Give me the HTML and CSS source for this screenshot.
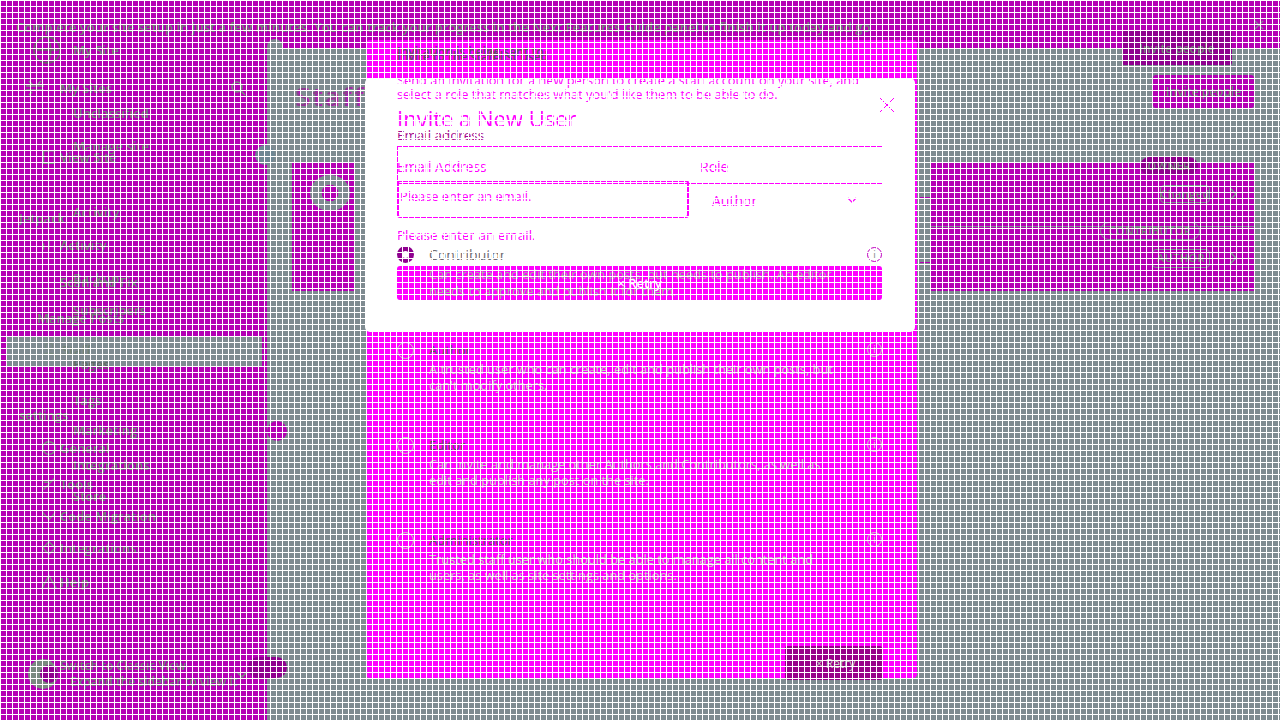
FILE: index.html
```html
<!DOCTYPE html>
<html lang="en">
<head>
<meta charset="utf-8">
<title>Invite a New User</title>
<link rel="stylesheet" href="styles.css">
</head>
<body>
<header class="topbar">
  <p class="notice">Complete your site setup in just a few minutes. You can track your progress in the Next Features Guide panel to finish it up today and go</p>
  <svg class="notice-close" viewBox="0 0 12 12"><path d="M1 1l10 10M11 1L1 11"/></svg>
</header>
<div class="shell">
  <nav class="sidebar">
    <div class="row site"><svg class="ic ic-site" viewBox="0 0 30 30"><circle cx="15" cy="15" r="13"/><path d="M4 15h22M15 2c5 6 5 20 0 26"/></svg><span class="tx">My Site</span></div>
    <div class="row t-88 outer"><svg class="ic" viewBox="0 0 20 20"><path d="M1 8h18M1 12h18M4 3l3 3M16 3l-3 3M4 17l3-3"/></svg><span class="tx">My Sites</span><svg class="search" viewBox="0 0 16 16"><circle cx="7" cy="7" r="5"/><path d="M11 11l4 4"/></svg></div>
    <div class="row t-113 inner"><span class="tx">Unclassified</span></div>
    <div class="row t-146 inner"><span class="tx">Manage site</span></div>
    <div class="row t-157 outer"><svg class="ic" viewBox="0 0 20 20"><path d="M4 3h12v14H4z"/></svg><span class="tx">View Site</span></div>
    <div class="row t-212 inner"><span class="tx">Activity</span></div>
    <div class="row t-218 section"><span class="tx">Jetpack</span></div>
    <div class="row t-245 outer"><svg class="ic" viewBox="0 0 20 20"><path d="M4 15V8M10 15V4M16 15v-5"/></svg><span class="tx">Activity</span></div>
    <div class="row t-278 inner"><span class="tx">Backup</span></div>
    <div class="row t-282 outer"><span class="tx">Scan and Fix</span></div>
    <div class="row t-310 inner"><span class="tx">Subscribers</span></div>
    <div class="row t-318 section-b"><span class="tx">Manage Posts</span></div>
    <div class="row t-350 staff"><svg class="ic" viewBox="0 0 20 20"><circle cx="10" cy="6" r="4"/><path d="M3 18c0-6 14-6 14 0"/></svg><span class="tx">Staff</span></div>
    <div class="row t-364 inner"><span class="tx">Pages</span></div>
    <div class="row t-400 inner"><span class="tx">Tags</span></div>
    <div class="row t-415 section"><span class="tx">settings</span></div>
    <div class="row t-430 inner"><span class="tx">Marketing</span></div>
    <div class="row t-448 outer"><svg class="ic" viewBox="0 0 20 20"><circle cx="10" cy="10" r="7"/></svg><span class="tx">General</span></div>
    <div class="row t-465 inner"><span class="tx">Integrations</span></div>
    <div class="row t-484 outer"><svg class="ic" viewBox="0 0 20 20"><path d="M4 16L16 4M4 8h6"/></svg><span class="tx">Tools</span></div>
    <div class="row t-496 inner"><span class="tx">Store</span></div>
    <div class="row t-516 outer"><svg class="ic" viewBox="0 0 20 20"><path d="M3 6l7 8 7-8"/></svg><span class="tx">Code Migration</span></div>
    <div class="row t-548 outer"><svg class="ic" viewBox="0 0 20 20"><path d="M10 3l7 7-7 7-7-7z"/></svg><span class="tx">Integrations</span></div>
    <div class="row t-582 outer"><svg class="ic" viewBox="0 0 20 20"><path d="M10 3l8 14H2z"/></svg><span class="tx">Help</span></div>
    <div class="foot">
      <svg class="foot-ic" viewBox="0 0 46 34"><circle class="foot-ring" cx="23" cy="17" r="15"/><circle class="foot-core" cx="29" cy="17" r="9"/></svg>
      <div class="foot-tx"><span class="tx">Switch to Classic View</span><span class="tx tx-low">Expand the sidebar to view it</span></div>
      <svg class="foot-chev" viewBox="0 0 12 8"><path d="M1 1l5 5 5-5"/></svg>
    </div>
  </nav>
  <main class="main">
    <h1 class="title">Staff</h1>
    <div class="cards">
      <section class="card card-left"><span class="avatar"></span></section>
      <section class="card card-right">
        <span class="tick tick-a"></span>
        <span class="tick tick-b"></span>
        <span class="pill owner">OWNER</span>
        <div class="line-row"><span class="pill soft change">Changed</span><svg class="chev" viewBox="0 0 8 14"><path d="M1 1l6 6-6 6"/></svg></div>
        <div class="line-row contrib-row"><span class="pill soft contrib">CONTRIBUTOR</span></div>
        <div class="line-row"><span class="pill soft authorp">AUTHOR</span><svg class="chev" viewBox="0 0 8 14"><path d="M1 1l6 6-6 6"/></svg></div>
      </section>
    </div>
  </main>
</div>

<button class="invite-top">Invite people</button>
<button class="invite-second">Invite people</button>
<span class="edge-dot edge-top"></span>
<span class="edge-dot edge-mid"></span>
<span class="edge-dot edge-blue"></span>
<span class="edge-pill"></span>

<div class="panel">
  <p class="panel-head">Invitation is being sent to<br>Invite to the staff list used</p>
  <div class="role role-author"><span class="radio"></span><div><b>Author</b><p>A trusted user who can create, edit and publish their own posts, but<br>can't modify others.</p></div><span class="info">i</span></div>
  <div class="role role-editor"><span class="radio"></span><div><b>Editor</b><p>Can invite and manage other Authors and Contributors, as well as<br>edit and publish any post on the site.</p></div><span class="info">i</span></div>
  <div class="role role-admin"><span class="radio"></span><div><b>Administrator</b><p>Trusted staff user who should be able to manage all content and<br>users, as well as site settings and options.</p></div><span class="info">i</span></div>
  <button class="cancel"><span class="x">×</span> Retry</button>
</div>

<div class="modal">
  <p class="intro">Send an invitation for a new person to create a staff account on your site, and select a role that matches what you'd like them to be able to do.</p>
  <h2 class="modal-title">Invite a New User</h2>
  <div class="field-label">Email address</div>
  <div class="box">
    <span class="cap">Email Address</span>
    <span class="cap cap-role">Role</span>
  </div>
  <div class="inputs">
    <div class="err-input">Please enter an email.</div>
    <div class="select"><span>Author</span><svg viewBox="0 0 12 8"><path d="M1 1l5 5 5-5"/></svg></div>
  </div>
  <p class="err-msg">Please enter an email.</p>
  <div class="contrib-line"><span class="radio-on"></span><b>Contributor</b><span class="info-on">i</span></div>
  <div class="retry">
    <p class="retry-under">Can create and edit their own posts, but needs to publish. An editor<br>needs to approve and publish it for them.</p>
    <span class="retry-label"><span class="x">×</span> Retry</span>
  </div>
  <svg class="close" viewBox="0 0 16 16"><path d="M1 1l14 14M15 1L1 15"/></svg>
</div>

<div class="mesh"></div>
</body>
</html>
```
FILE: styles.css
```css
* { box-sizing: border-box; }
html, body { margin: 0; height: 100%; }
body { width: 1280px; height: 720px; overflow: hidden; position: relative; background: #7f8b91; font-family: "Open Sans", "Noto Sans", sans-serif; font-size: 12px; color: #6f8176; }
p, h1, h2 { margin: 0; }
svg { fill: none; stroke: currentColor; stroke-width: 1.5; }

.topbar { height: 49px; background: #b400b4; display: flex; align-items: center; padding: 4px 16px 0 16px; position: relative; }
.notice { flex: 1; font-size: 13px; font-weight: 600; line-height: 14px; margin-top: 1px; white-space: nowrap; }
.notice-close { width: 10px; height: 10px; margin: 0 0 4px 0; color: #7f8b91; }

.shell { display: flex; height: 671px; }
.sidebar { width: 267px; background: #b400b4; display: flex; flex-direction: column; position: relative; font-size: 13px; font-weight: 600; }
.row { height: 14px; line-height: 14px; display: flex; align-items: center; white-space: nowrap; position: relative; }
.tx { color: #6f8176; }
.ic { width: 18px; height: 18px; flex: none; color: #7a8a80; position: absolute; left: 40px; top: -2px; }
.outer { padding-left: 60px; }
.inner { padding-left: 73px; }
.section { padding-left: 19px; }
.section-b { padding-left: 37px; }
.site { margin-top: -6px; padding-left: 73px; height: 14px; font-size: 13px; }
.ic-site { width: 30px; height: 30px; left: 32px; top: -8px; color: #666; }
.search { width: 16px; height: 16px; position: absolute; left: 230px; top: -1px; color: #7a8a80; }
.t-88 { margin-top: 24px; }
.t-88 .ic { left: 25px; width: 20px; height: 20px; top: -3px; }
.t-113 { margin-top: 11px; }
.t-146 { margin-top: 19px; }
.t-157 { margin-top: -3px; }
.t-212 { margin-top: 41px; }
.t-218 { margin-top: -8px; }
.t-245 { margin-top: 13px; }
.t-278 { margin-top: 19px; }
.t-282 { margin-top: -10px; }
.t-310 { margin-top: 14px; }
.t-318 { margin-top: -6px; }
.t-350 { margin-top: 18px; padding-left: 62px; }
.t-364 { margin-top: 0; }
.t-400 { margin-top: 22px; }
.t-415 { margin-top: 1px; }
.t-430 { margin-top: 1px; }
.t-448 { margin-top: 4px; }
.t-465 { margin-top: 3px; }
.t-484 { margin-top: 5px; }
.t-496 { margin-top: -2px; }
.t-516 { margin-top: 6px; }
.t-548 { margin-top: 18px; }
.t-582 { margin-top: 20px; }
.staff::before { content: ""; position: absolute; left: 6px; right: 5px; top: -6px; height: 30px; background: #7f8b91; }
.staff .tx, .staff .ic { position: relative; }
.staff .ic { position: absolute; }
.t-364 .tx { color: #5f6a66; }

.foot { margin-top: 68px; display: flex; align-items: center; padding-left: 20px; height: 34px; position: relative; }
.foot-ic { width: 46px; height: 34px; stroke: none; flex: none; }
.foot-ring { fill: #7a8a80; }
.foot-core { fill: #8f008f; }
.foot-tx { display: flex; flex-direction: column; font-size: 12px; line-height: 16px; margin-left: -6px; white-space: nowrap; }
.tx-low { margin-left: 10px; }
.foot-chev { width: 12px; height: 8px; position: absolute; left: 236px; top: 14px; color: #7a8a80; }

.main { flex: 1; padding: 34px 25px 0 28px; position: relative; }
.title { font-weight: 400; font-size: 26px; line-height: 26px; letter-spacing: 3px; color: #8f3f8f; text-shadow: 1px 0 #d000d0; }
.cards { display: flex; justify-content: space-between; margin-top: 54px; height: 128px; margin-left: -3px; }
.card { background: #b400b4; height: 128px; position: relative; }
.card-left { width: 62px; padding: 12px 18px; }
.avatar { display: block; width: 40px; height: 36px; border-radius: 50%; background: radial-gradient(circle, #b400b4 0 30%, #7f8b91 32%); }
.card-right { width: 324px; display: flex; flex-direction: column; align-items: flex-end; padding-right: 45px; }
.tick { position: absolute; left: -11px; width: 11px; height: 1px; background: #b400b4; }
.tick-a { top: 34px; }
.tick-b { top: 99px; }
.pill { display: inline-flex; align-items: center; justify-content: center; font-size: 11px; font-weight: 600; line-height: 18px; height: 18px; border-radius: 9px; color: #6f8176; letter-spacing: .4px; }
.owner { background: #8f008f; width: 58px; margin-top: -6px; margin-right: 12px; }
.line-row { display: flex; align-items: center; position: relative; height: 18px; }
.line-row .chev { width: 8px; height: 14px; color: #7f8b91; position: absolute; right: -27px; top: 2px; }
.soft { border: 1px solid #7f8b91; border-radius: 4px; }
.change { width: 50px; margin-top: 0; }
.line-row:nth-of-type(1) { margin-top: 10px; }
.contrib-row { margin-top: 19px; margin-right: 10px; }
.contrib { width: 100px; border-radius: 9px; }
.line-row:last-child { margin-top: 9px; }
.authorp { width: 58px; height: 19px; }
.card-right::before { content: ""; position: absolute; left: 0; right: 0; top: 63px; height: 1px; background: #7f8b91; }

.invite-top, .invite-second, .cancel { border: 0; font-family: inherit; font-size: 12px; font-weight: 600; color: #6f8076; position: absolute; }
.invite-top { left: 1122px; top: 31px; width: 110px; height: 34px; background: #8f008f; border-radius: 2px; }
.invite-second { left: 1153px; top: 75px; width: 101px; height: 33px; background: #b400b4; border-radius: 3px; }

.edge-dot { position: absolute; width: 20px; height: 20px; border-radius: 50%; }
.edge-top { left: 267px; top: 39px; width: 16px; height: 16px; background: #7f8b91; }
.edge-mid { left: 267px; top: 421px; background: #b400b4; }
.edge-blue { left: 255px; top: 145px; background: #6f8794; }
.edge-pill { position: absolute; left: 248px; top: 657px; width: 39px; height: 21px; border-radius: 11px; background: #8f008f; }

.panel { position: absolute; left: 366px; top: 40px; width: 551px; height: 638px; background: #ff00ff; border-radius: 4px; padding: 0 35px 0 31px; color: #c7d0c2; font-size: 12.8px; }
.panel-head { position: absolute; left: 31px; top: 9px; color: #5f4f60; font-size: 12px; font-weight: 600; line-height: 5px; white-space: nowrap; }
.role { position: absolute; left: 31px; right: 35px; display: flex; gap: 15px; }
.role > div { flex: 1; }
.role b { display: block; font-weight: 400; font-size: 13px; line-height: 16px; color: #555; }
.role p { line-height: 16px; margin-top: 3px; white-space: nowrap; }
.role-author { top: 302px; }
.role-editor { top: 397px; }
.role-admin { top: 492px; }
.radio { width: 17px; height: 17px; border: 1px solid #c7d0c2; border-radius: 50%; flex: none; }
.info { width: 15px; height: 15px; border: 1px solid #c7d0c2; border-radius: 50%; flex: none; font-size: 10px; line-height: 13px; text-align: center; }
.cancel { left: 419px; top: 606px; width: 97px; height: 34px; background: #98008a; color: #c7d0c2; border-radius: 2px; padding-left: 10px; font-weight: 400; }

.modal { position: absolute; left: 365px; top: 78px; width: 550px; height: 254px; background: #fff; border-radius: 5px; padding: 0 33px 0 32px; color: #ff00ff; font-size: 12.8px; }
.intro { line-height: 14px; margin-top: -5px; position: relative; }
.modal-title { font-weight: 400; font-size: 22px; line-height: 28px; margin-top: 3px; }
.field-label { font-size: 13.4px; line-height: 14px; color: #a50a8d; margin-top: -4px; }
.box { height: 38px; margin-top: 4px; border: 1px solid #ff00ff; border-right: 0; position: relative; display: flex; align-items: center; }
.cap { font-size: 13.6px; margin-left: -1px; margin-top: 2px; }
.cap-role { position: absolute; left: 302px; font-size: 14px; margin: 2px 0 0; }
.inputs { display: flex; margin-top: -4px; height: 38px; }
.err-input { width: 292px; height: 38px; border: 2px solid #ff00ff; border-radius: 3px; padding: 6px 0 0 1px; line-height: 16px; background: #fff; }
.select { flex: 1; display: flex; align-items: center; justify-content: space-between; padding: 3px 25px 0 23px; font-size: 14px; }
.select svg { width: 10px; height: 7px; }
.err-msg { font-size: 13.5px; line-height: 14px; margin-top: 10px; }
.contrib-line { display: flex; align-items: center; height: 17px; margin-top: 4px; }
.contrib-line b { font-weight: 400; font-size: 14px; color: #6f6a70; margin-left: 15px; flex: 1; }
.radio-on { width: 17px; height: 17px; border-radius: 50%; border: 5px solid #8f008f; background: #fff; flex: none; }
.info-on { width: 15px; height: 15px; border: 1px solid #c000c0; border-radius: 50%; color: #8a8a8a; font-size: 10px; line-height: 13px; text-align: center; }
.retry { height: 34px; margin-top: 3px; background: #ff00ff; border-radius: 3px; position: relative; display: flex; align-items: center; justify-content: center; }
.retry-under { position: absolute; left: 32px; top: 0; color: #a8b0a6; font-size: 12.8px; line-height: 17px; white-space: nowrap; }
.retry-label { position: relative; color: #fff; font-size: 13px; font-weight: 600; }
.close { position: absolute; left: 514px; top: 19px; width: 16px; height: 16px; stroke-width: 1; color: #ff00ff; }

.mesh { position: fixed; inset: 0; pointer-events: none; background-image: linear-gradient(#fff 1px, transparent 1px), linear-gradient(90deg, #fff 1px, transparent 1px); background-size: 6px 6px; }
```
